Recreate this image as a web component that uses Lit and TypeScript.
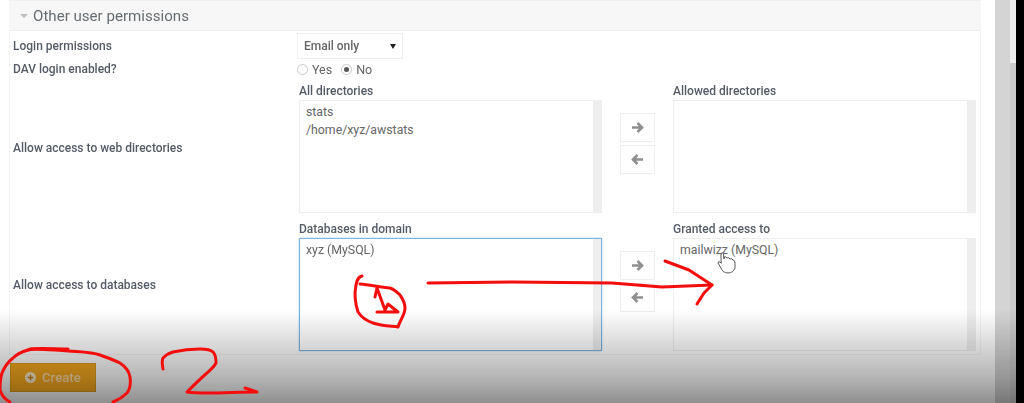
import { LitElement, html, css, svg } from "lit";
import { customElement } from "lit/decorators.js";

const rightArrow = svg`<path d="M1 6.5H10M6.5 2L11 6.5L6.5 11" fill="none" stroke="#8f8f8f" stroke-width="2.6"/>`;
const leftArrow = svg`<path d="M12 6.5H3M6.5 2L2 6.5L6.5 11" fill="none" stroke="#8f8f8f" stroke-width="2.6"/>`;

@customElement("app-root")
export class AppRoot extends LitElement {
  static styles = css`
    :host { display: block; width: 1024px; height: 403px; overflow: hidden; position: relative; background: #fff; font-family: Roboto, "Liberation Sans", sans-serif; color: #555b66; font-size: 12px; }
    .page { display: flex; width: 1024px; height: 403px; filter: blur(0.45px); }
    .main { flex: 1; min-width: 0; padding-left: 9px; }
    .panel { width: 972px; height: 355px; box-sizing: border-box; border: 1px solid #f4f4f4; border-top: none; display: flex; flex-direction: column; }
    .head { height: 31px; flex: none; box-sizing: border-box; background: #f7f7f7; border-top: 1px solid #f0f0f0; border-bottom: 1px solid #eee; margin: 0 -1px 0 -1px; display: flex; align-items: center; padding-left: 11px; gap: 5px; font-size: 15.1px; color: #666c70; }
    .caret { width: 0; height: 0; border-left: 4px solid transparent; border-right: 4px solid transparent; border-top: 4px solid #c0c0c0; margin-top: 1px; }
    .body { padding: 2px 0 0 3px; display: grid; grid-template-columns: 286px 1fr; }
    .label { font-weight: 500; font-size: 12px; display: flex; align-items: center; color: #555b66; }
    .select { width: 106px; height: 26px; box-sizing: border-box; border: 1px solid #f0f0f0; display: flex; align-items: center; justify-content: space-between; padding: 0 6px; margin-left: -2px; font-size: 12px; font-weight: 500; color: #666; }
    .tri { width: 0; height: 0; border-left: 3px solid transparent; border-right: 3px solid transparent; border-top: 5px solid #222; }
    .radios { height: 20px; display: flex; align-items: center; margin-left: -2px; font-size: 12.5px; color: #666; }
    .radio { width: 9px; height: 9px; border: 1px solid #c9c9c9; border-radius: 50%; margin-right: 4px; display: flex; align-items: center; justify-content: center; background: #fff; }
    .radio.on::after { content: ""; width: 5px; height: 5px; border-radius: 50%; background: #555; }
    .yes { margin-right: 9px; }
    .pick { display: grid; grid-template-columns: 303px 71px 303px; padding-top: 3px; height: 135px; box-sizing: border-box; }
    .pick.first { height: 138px; }
    .col-label { height: 18px; font-size: 12px; font-weight: 500; display: flex; align-items: center; color: #555b66; }
    .box { width: 303px; height: 113px; box-sizing: border-box; border: 1px solid #eee; background: #fff; padding: 2px 9px 0 6px; line-height: 18px; display: flex; justify-content: space-between; font-size: 12.3px; color: #666; position: relative; }
    .box::after { content: ""; position: absolute; top: 0; bottom: 0; right: 0; width: 8px; background: #eee; }
    .box.focus { border: 1px solid #7db4e0; box-shadow: 0 0 2px #a8d0f0; }
    .arrows { display: flex; flex-direction: column; gap: 3px; padding: 0 0 0 18px; }
    .arrows button { width: 35px; height: 29px; box-sizing: border-box; padding: 0; border: 1px solid #eee; background: #fff; display: flex; align-items: center; justify-content: center; }
    .arrows svg { width: 13px; height: 13px; display: block; }
    .arrows.a1 { padding-top: 31px; }
    .arrows.a2 { padding-top: 31px; }
    .sb { width: 29px; flex: none; display: flex; }
    .sb1 { width: 15px; background: #d4d4d4; }
    .sb2 { width: 6px; background: #ccc; }
    .thumb { height: 63px; background: #efefef; }
    .sb3 { width: 8px; background: #000; }
    .footer { position: absolute; left: 10px; top: 363px; width: 86px; height: 29px; box-sizing: border-box; border: 1px solid #d99a20; background: #f5a81e; color: #fff; display: flex; align-items: center; padding: 0 0 0 14px; gap: 6px; font-size: 13.2px; font-weight: 500; }
    .footer span { opacity: .6; }
    .plus { width: 11px; height: 11px; display: block; opacity: .75; }
    .shade { position: absolute; left: 0; right: 0; top: 310px; bottom: 0; background: linear-gradient(to bottom, rgba(0,0,0,0) 0%, rgba(0,0,0,.18) 45%, rgba(0,0,0,.3) 75%, rgba(0,0,0,.44) 100%); pointer-events: none; }
    .ink { position: absolute; left: 0; top: 0; width: 1024px; height: 403px; pointer-events: none; filter: blur(0.4px); }
    .ink path { fill: none; stroke: #f40d0d; stroke-width: 3; stroke-linecap: round; stroke-linejoin: round; }
    .ink .hand { fill: #fff; stroke: #555; stroke-width: 1; }
  `;

  private arrows(cls: string) {
    return html`<div class="arrows ${cls}">
      <button><svg viewBox="0 0 13 13">${rightArrow}</svg></button>
      <button><svg viewBox="0 0 13 13">${leftArrow}</svg></button>
    </div>`;
  }

  render() {
    return html`
      <div class="page">
        <div class="main">
          <div class="panel">
            <div class="head"><i class="caret"></i>Other user permissions</div>
            <div class="body">
              <div class="label">Login permissions</div>
              <div><div class="select">Email only<i class="tri"></i></div></div>
              <div class="label">DAV login enabled?</div>
              <div class="radios"><i class="radio"></i><span class="yes">Yes</span><i class="radio on"></i><span>No</span></div>
              <div class="label">Allow access to web directories</div>
              <div class="pick first">
                <div><div class="col-label">All directories</div><div class="box"><div>stats<br />/home/xyz/awstats</div></div></div>
                ${this.arrows("a1")}
                <div><div class="col-label">Allowed directories</div><div class="box"></div></div>
              </div>
              <div class="label">Allow access to databases</div>
              <div class="pick">
                <div><div class="col-label">Databases in domain</div><div class="box focus"><div>xyz (MySQL)</div></div></div>
                ${this.arrows("a2")}
                <div><div class="col-label">Granted access to</div><div class="box"><div>mailwizz (MySQL)</div></div></div>
              </div>
            </div>
          </div>
        </div>
        <div class="sb">
          <div class="sb1"></div>
          <div class="sb2"><div class="thumb"></div></div>
          <div class="sb3"></div>
        </div>
      </div>
      <div class="footer">
        <svg class="plus" viewBox="0 0 12 12"><circle cx="6" cy="6" r="6" fill="#fff" /><path d="M3 6H9M6 3V9" stroke="#b07a1c" stroke-width="1.6" /></svg>
        <span>Create</span>
      </div>
      <div class="shade"></div>
      <svg class="ink" viewBox="0 0 1024 403">
        <path d="M428 283 L512 282 L612 283 L662 287 L712 285" />
        <path d="M665 261 L689 270 L712 285 L704 293 L697 304" />
        <path d="M362 276 C358 277 357 280 356 285 C354 295 355 303 358 312 C362 318 367 321 373 323 C382 326 390 326 398 327 C400 320 405 315 405 308 C405 302 402 298 400 295 C396 291 393 289 390 288 C380 287 370 285 360 284" />
        <path d="M375 297 L377 288 L385 310 M377 312 L398 312 L388 304 L385 310" />
        <path d="M28 350 C34 348 50 350 68 351 C80 352 92 352 100 355 C108 358 114 360 120 363 C126 367 129 371 130 377 C131 384 130 389 127 393 C123 397 118 400 113 402" />
        <path d="M28 350 C21 352 16 355 13 358 C8 362 4 368 2 373 C0 379 0 385 0 390 C2 396 6 400 10 402" />
        <path d="M30 349 C40 348 55 349 68 349" />
        <path d="M163 369 C162 364 162 360 163 358 C166 355 169 353 173 352 C182 350 192 349 200 349 C206 349 211 350 213 352 C216 355 216 360 216 363 C214 367 210 370 207 373 C200 379 193 386 187 392 C194 393 200 393 207 393 C225 393 240 392 257 392 L245 388" />
        <path class="hand" d="M721 258 L721 254 Q722 251 723.5 254 L724 259 L724 257 Q726 256 727 258 Q729 257 730 259 Q732 258 733 260 Q735 260 735 263 L735 268 Q733 273 728 273 Q723 273 721 268 L718 263 Q718 261 720 262 L721 263 Z" />
      </svg>
    `;
  }
}
